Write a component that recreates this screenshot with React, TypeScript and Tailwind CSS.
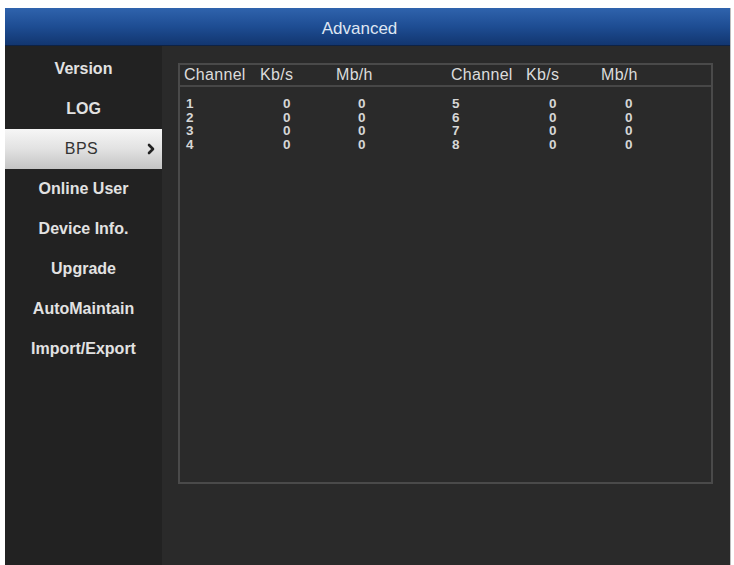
import React from "react";

const menu = ["Version", "LOG", "BPS", "Online User", "Device Info.", "Upgrade", "AutoMaintain", "Import/Export"];

const left = ["1", "2", "3", "4"];
const right = ["5", "6", "7", "8"];

export default function App() {
  return (
    <div className="w-[734px] h-[565px] bg-white pt-[8px] pl-[5px] pr-[3px] overflow-hidden" style={{ fontFamily: '"Liberation Sans", Arial, sans-serif' }}>
      <div className="h-[557px] flex flex-col bg-[#2a2a2a] border-r border-[#bdbdbd]">
        {/* title bar */}
        <div className="h-[38px] flex items-center justify-center bg-gradient-to-b from-[#2f63ad] via-[#1e4d93] to-[#123670] border-b border-[#0e2244]">
          <span className="text-[17px] text-[#dfe6f2] pt-[5px] pr-[16px]">Advanced</span>
        </div>

        <div className="flex flex-1">
          {/* sidebar */}
          <div className="w-[157px] bg-[#222222] pt-[3px] flex flex-col">
            {menu.map((m) =>
              m === "BPS" ? (
                <div key={m} className="h-[40px] relative flex items-center justify-center bg-gradient-to-b from-[#f6f6f6] via-[#e2e2e2] to-[#c4c4c4] text-[#333] text-[16px] tracking-[0.5px]">
                  <span className="pr-[4px]">{m}</span>
                  <svg className="absolute right-[6px] top-[14px]" width="10" height="12" viewBox="0 0 10 12">
                    <path d="M3 2 L7 6 L3 10" fill="none" stroke="#222" strokeWidth="2.6" strokeLinecap="round" strokeLinejoin="round" />
                  </svg>
                </div>
              ) : (
                <div key={m} className="h-[40px] flex items-center justify-center text-[16px] font-bold text-[#e2e2e2]">
                  {m}
                </div>
              )
            )}
          </div>

          {/* content */}
          <div className="flex-1 pt-[17px] pl-[16px] pr-[17px]">
            <div className="h-[421px] border-2 border-[#4a4a4a] text-[#dcdcdc]">
              <div className="h-[22px] flex items-center pl-[4px] border-b-2 border-[#474747] text-[16px] tracking-[0.3px]">
                <span className="w-[76px]">Channel</span>
                <span className="w-[76px]">Kb/s</span>
                <span className="w-[115px]">Mb/h</span>
                <span className="w-[75px]">Channel</span>
                <span className="w-[75px]">Kb/s</span>
                <span>Mb/h</span>
              </div>
              <div className="pt-[10px] pl-[6px] text-[13.5px] leading-[13.7px] font-bold text-[#d6d6d6]">
                {left.map((ch, i) => (
                  <div key={ch} className="flex">
                    <span className="w-[97px]">{ch}</span>
                    <span className="w-[75px]">0</span>
                    <span className="w-[94px]">0</span>
                    <span className="w-[97px]">{right[i]}</span>
                    <span className="w-[76px]">0</span>
                    <span>0</span>
                  </div>
                ))}
              </div>
            </div>
          </div>
        </div>
      </div>
    </div>
  );
}
